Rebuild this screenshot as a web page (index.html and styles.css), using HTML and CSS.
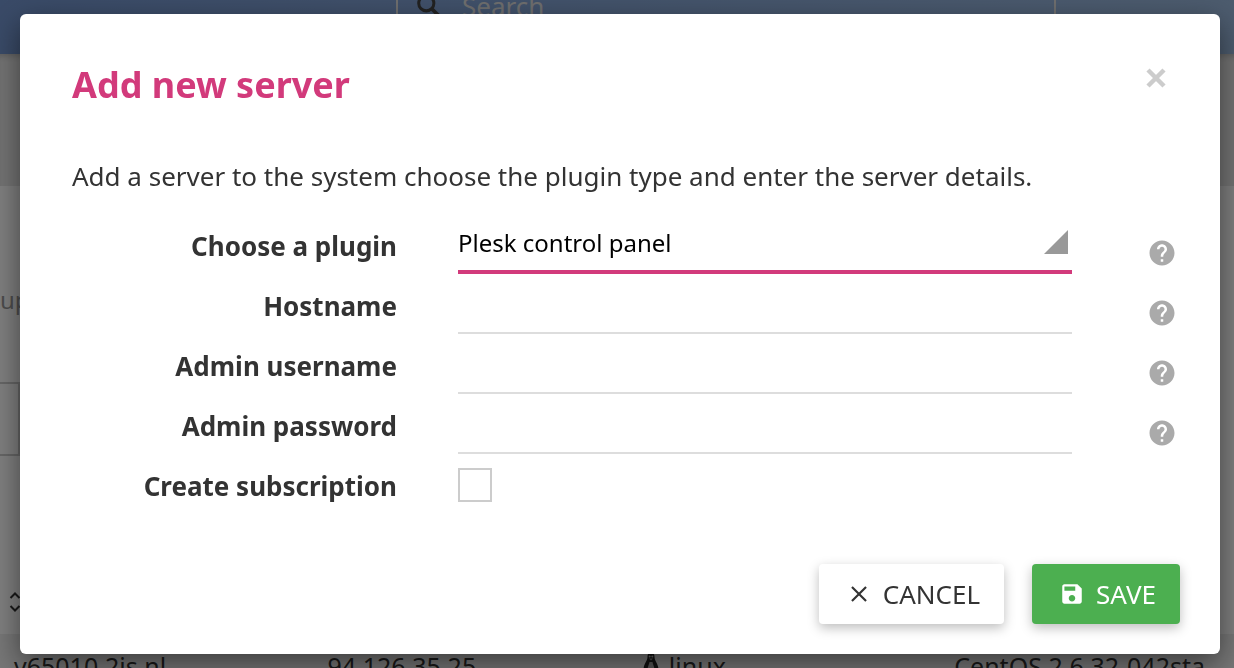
FILE: index.html
```html
<!DOCTYPE html>
<html lang="en">
<head>
<meta charset="utf-8">
<title>Add new server</title>
<link rel="stylesheet" href="styles.css">
</head>
<body>
<div class="page">
  <header class="topbar">
    <label class="search">
      <svg class="search-icon" viewBox="0 0 24 24" aria-hidden="true"><circle cx="9.500" cy="9.500" r="7" fill="none" stroke="currentColor" stroke-width="2.800"/><path d="M14.500 14.500L22 22" stroke="currentColor" stroke-width="3.400"/></svg>
      <input class="search-input" type="text" placeholder="Search" aria-label="Search">
    </label>
  </header>
  <div class="band"></div>
  <main class="content">
    <p class="group-text">up</p>
    <div class="filter"></div>
    <table class="servers">
      <thead>
        <tr>
          <th class="col"><svg class="sort" viewBox="0 0 12 20" fill="none" stroke="currentColor" stroke-width="2" aria-hidden="true"><path d="M1.500 6L6 1.500L10.500 6M1.500 14L6 18.500L10.500 14"/></svg></th>
          <th class="col"></th><th class="col"></th><th></th>
        </tr>
      </thead>
      <tbody>
        <tr>
          <td>v65010.2is.nl</td>
          <td>94.126.35.25</td>
          <td><svg class="tux" viewBox="0 0 20 24" aria-hidden="true"><path fill="#222" d="M10 0C7.500 0 6.500 2 6.500 5c0 4-4 7-4 13l3 5h9l3-5c0-6-4-9-4-13 0-3-1-5-3.500-5z"/><path fill="#aaa" d="M8.500 10h3c.5 3 2 5 2 8l-2 4h-3l-2-4c0-3 1.500-5 2-8z"/><circle cx="8.700" cy="4.500" r="1" fill="#ccc"/><circle cx="11.300" cy="4.500" r="1" fill="#ccc"/><path fill="#999" d="M8 6.500h4l-2 2z"/></svg>linux</td>
          <td>CentOS 2.6.32-042sta</td>
        </tr>
      </tbody>
    </table>
  </main>
</div>

<div class="overlay">
  <form class="dialog" role="dialog" aria-labelledby="title">
    <div class="dialog-head">
      <h1 class="title" id="title">Add new server</h1>
      <button class="close" type="button" aria-label="Close"><svg class="close-icon" viewBox="0 0 20 20" aria-hidden="true"><path d="M2 2L18 18M18 2L2 18" stroke="currentColor" stroke-width="4.500"/></svg></button>
    </div>
    <p class="intro">Add a server to the system choose the plugin type and enter the server details.</p>
    <div class="fields">
      <div class="field">
        <label class="label" for="plugin">Choose a plugin</label>
        <div class="select-wrap">
          <select class="select" id="plugin"><option>Plesk control panel</option></select>
          <svg class="corner" viewBox="0 0 24 24" aria-hidden="true"><path d="M24 0V24H0z" fill="#999"/></svg>
        </div>
        <svg class="help" viewBox="0 0 24 24" role="img" aria-label="Help"><path d="M12 2C6.480 2 2 6.480 2 12s4.480 10 10 10 10-4.480 10-10S17.520 2 12 2zm1 17h-2v-2h2v2zm2.070-7.750l-.9.920C13.450 12.900 13 13.500 13 15h-2v-.5c0-1.100.45-2.100 1.170-2.830l1.240-1.260c.37-.36.59-.86.59-1.410 0-1.100-.9-2-2-2s-2 .9-2 2H8c0-2.210 1.790-4 4-4s4 1.790 4 4c0 .88-.36 1.680-.93 2.250z"/></svg>
      </div>
      <div class="field">
        <label class="label" for="host">Hostname</label>
        <input class="input" id="host" type="text">
        <svg class="help" viewBox="0 0 24 24" role="img" aria-label="Help"><path d="M12 2C6.480 2 2 6.480 2 12s4.480 10 10 10 10-4.480 10-10S17.520 2 12 2zm1 17h-2v-2h2v2zm2.070-7.750l-.9.920C13.450 12.900 13 13.500 13 15h-2v-.5c0-1.100.45-2.100 1.170-2.830l1.240-1.260c.37-.36.59-.86.59-1.410 0-1.100-.9-2-2-2s-2 .9-2 2H8c0-2.210 1.790-4 4-4s4 1.790 4 4c0 .88-.36 1.680-.93 2.250z"/></svg>
      </div>
      <div class="field">
        <label class="label" for="user">Admin username</label>
        <input class="input" id="user" type="text">
        <svg class="help" viewBox="0 0 24 24" role="img" aria-label="Help"><path d="M12 2C6.480 2 2 6.480 2 12s4.480 10 10 10 10-4.480 10-10S17.520 2 12 2zm1 17h-2v-2h2v2zm2.070-7.750l-.9.920C13.450 12.900 13 13.500 13 15h-2v-.5c0-1.100.45-2.100 1.170-2.830l1.240-1.260c.37-.36.59-.86.59-1.410 0-1.100-.9-2-2-2s-2 .9-2 2H8c0-2.210 1.790-4 4-4s4 1.790 4 4c0 .88-.36 1.680-.93 2.250z"/></svg>
      </div>
      <div class="field">
        <label class="label" for="pass">Admin password</label>
        <input class="input" id="pass" type="password">
        <svg class="help" viewBox="0 0 24 24" role="img" aria-label="Help"><path d="M12 2C6.480 2 2 6.480 2 12s4.480 10 10 10 10-4.480 10-10S17.520 2 12 2zm1 17h-2v-2h2v2zm2.070-7.750l-.9.920C13.450 12.900 13 13.500 13 15h-2v-.5c0-1.100.45-2.100 1.170-2.830l1.240-1.260c.37-.36.59-.86.59-1.410 0-1.100-.9-2-2-2s-2 .9-2 2H8c0-2.210 1.790-4 4-4s4 1.790 4 4c0 .88-.36 1.680-.93 2.250z"/></svg>
      </div>
      <div class="field">
        <label class="label" for="sub">Create subscription</label>
        <input class="check" id="sub" type="checkbox">
      </div>
    </div>
    <div class="actions">
      <button class="btn" type="button"><svg class="btn-icon" viewBox="0 0 24 24" aria-hidden="true"><path d="M5.500 5.500L18.500 18.500M18.500 5.500L5.500 18.500" stroke="currentColor" stroke-width="2"/></svg>CANCEL</button>
      <button class="btn btn-save" type="submit"><svg class="btn-icon" viewBox="0 0 24 24" aria-hidden="true"><path fill="currentColor" d="M17 3H5c-1.110 0-2 .9-2 2v14c0 1.100.89 2 2 2h14c1.100 0 2-.9 2-2V7l-4-4zm-5 16c-1.660 0-3-1.340-3-3s1.340-3 3-3 3 1.340 3 3-1.340 3-3 3zm3-10H5V5h10v4z"/></svg>SAVE</button>
    </div>
  </form>
</div>
</body>
</html>
```
FILE: styles.css
```css
* { box-sizing: border-box; }
html, body { height: 100%; }
body {
  margin: 0;
  overflow: hidden;
  font-family: "Noto Sans", sans-serif;
  font-size: 26px;
  line-height: 36px;
  color: #333;
}
button, input, select { font: inherit; color: inherit; }

/* Server list behind the dialog */
.page { height: 100%; overflow: hidden; background: #fff; }
.topbar {
  height: 54px;
  padding: 0 178px 0 396px;
  overflow: hidden;
  background: linear-gradient(90deg, #7395cf, #9ab8dd);
}
.search {
  display: flex;
  align-items: center;
  height: 52px;
  margin-top: -20px;
  padding-left: 18px;
  border: 2px solid #ddd;
}
.search-icon { width: 26px; height: 26px; color: #444; }
.search-input {
  flex: 1;
  min-width: 0;
  margin-left: 20px;
  padding: 0;
  border: 0;
  background: none;
}
.search-input::placeholder { color: #ddd; opacity: 1; }
.band { height: 132px; background: #e8e8e8; box-shadow: inset 0 6px 6px -4px rgba(0, 0, 0, 0.2); }
.content { padding-top: 98px; }
.group-text { margin: 0; font-size: 24px; line-height: 32px; color: #999; }
.filter {
  width: 20px;
  height: 74px;
  margin-top: 66px;
  border: 2px solid #ccc;
  border-left: 0;
}
.servers {
  width: 100%;
  margin-top: 114px;
  table-layout: fixed;
  border-collapse: collapse;
  font-size: 25px;
  white-space: nowrap;
}
.servers th, .servers td { height: 64px; padding: 0 0 0 14px; text-align: left; }
.servers td { background: #eee; }
.servers .col { width: 25.4%; }
.servers th { padding-left: 9px; }
.sort { display: block; width: 12px; height: 20px; }
.tux { width: 20px; height: 24px; margin-right: 8px; }

/* Dialog */
.overlay {
  position: fixed;
  inset: 0;
  padding: 14px 14px 14px 20px;
  background: rgba(0, 0, 0, 0.5);
}
.dialog {
  padding: 50px 40px 30px 52px;
  border-radius: 6px;
  background: #fff;
  box-shadow: 0 10px 30px rgba(0, 0, 0, 0.5);
}
.dialog-head { display: flex; justify-content: space-between; align-items: flex-start; }
.title { margin: 0; font-size: 36px; line-height: 42px; font-weight: 700; color: #d23a7b; }
.close { display: flex; margin-right: 14px; padding: 4px 0; border: 0; background: none; color: #ccc; }
.close-icon { width: 20px; height: 20px; }
.intro { margin: 52px 0 20px; }
.field {
  display: grid;
  grid-template-columns: minmax(0, 386fr) minmax(0, 614fr) 105px;
  align-items: center;
  height: 60px;
  margin-right: 3px;
}
.label { padding: 4px 61px 0 0; text-align: right; font-weight: 700; }
.select-wrap { position: relative; height: 60px; }
.select {
  width: 100%;
  height: 60px;
  padding: 2px 30px 0 0;
  border: 0;
  border-bottom: 4px solid #d23a7b;
  border-radius: 0;
  appearance: none;
  background: none;
  font-size: 24px;
  color: #000;
}
.corner { position: absolute; right: 4px; top: 16px; width: 24px; height: 24px; pointer-events: none; }
.input { width: 100%; height: 60px; padding: 0; border: 0; border-bottom: 2px solid #ddd; background: none; }
.help { width: 30px; height: 30px; justify-self: end; align-self: end; margin-bottom: 6px; fill: #aaa; }
.check { appearance: none; width: 34px; height: 34px; margin: 2px 0 0; border: 2px solid #ccc; background: #fff; }
.actions { display: flex; justify-content: flex-end; gap: 28px; margin-top: 50px; }
.btn {
  display: flex;
  align-items: center;
  gap: 11px;
  height: 60px;
  padding: 0 24px 0 27px;
  border: 0;
  border-radius: 4px;
  background: #fff;
  box-shadow: 0 4px 12px rgba(0, 0, 0, 0.26);
}
.btn-save { background: #4caf50; color: #fff; }
.btn-icon { width: 26px; height: 26px; }
```
